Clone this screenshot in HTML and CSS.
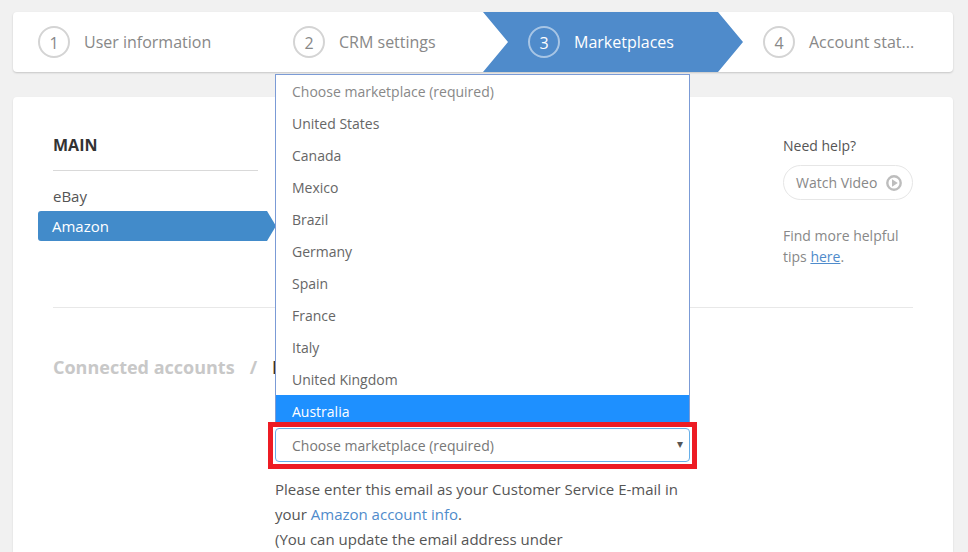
FILE: index.html
```html
<!DOCTYPE html>
<html lang="en">
<head>
<meta charset="utf-8">
<title>Marketplaces</title>
<link rel="stylesheet" href="styles.css">
</head>
<body>
<nav class="stepper">
  <div class="step step-1"><span class="num">1</span><span class="label">User information</span></div>
  <div class="step step-2"><span class="num">2</span><span class="label">CRM settings</span></div>
  <div class="step step-3 active"><span class="num">3</span><span class="label">Marketplaces</span></div>
  <div class="step step-4"><span class="num">4</span><span class="label">Account stat...</span></div>
</nav>
<main class="card">
  <section class="top">
    <div class="side">
      <h2 class="side-title">MAIN</h2>
      <ul class="side-list">
        <li class="side-item">eBay</li>
        <li class="side-item current">Amazon</li>
      </ul>
    </div>
    <aside class="help">
      <p class="help-title">Need help?</p>
      <a class="video" href="#">Watch Video
        <svg class="play" width="16" height="16" viewBox="0 0 16 16"><circle cx="8" cy="8" r="6.7" fill="none" stroke="#bdbdbd" stroke-width="2.4"/><path d="M6 4.2 11.8 8 6 11.8Z" fill="#bdbdbd"/></svg>
      </a>
      <p class="tips">Find more helpful tips <a href="#">here</a>.</p>
    </aside>
  </section>
  <hr class="rule">
  <h1 class="crumbs"><span class="crumb-link">Connected accounts</span><span class="crumb-sep">/</span><span class="crumb-now">Marketplace</span></h1>
  <section class="form">
    <div class="select-wrap">
      <ul class="dropdown">
        <li>Choose marketplace (required)</li>
        <li>United States</li>
        <li>Canada</li>
        <li>Mexico</li>
        <li>Brazil</li>
        <li>Germany</li>
        <li>Spain</li>
        <li>France</li>
        <li>Italy</li>
        <li>United Kingdom</li>
        <li class="hover">Australia</li>
      </ul>
      <div class="select">Choose marketplace (required)<span class="caret">▾</span></div>
      <div class="highlight"></div>
    </div>
    <p class="note">Please enter this email as your Customer Service E-mail in your <a href="#">Amazon account info</a>.<br>(You can update the email address under</p>
  </section>
</main>
</body>
</html>
```
FILE: styles.css
```css
* { box-sizing: border-box; }
html, body { height: 552px; overflow: hidden; }
body {
  margin: 0;
  padding: 12px 15px 0 13px;
  background: #f1f1f1;
  font-family: "Open Sans", sans-serif;
  font-size: 14px;
  color: #555;
}
ul { list-style: none; margin: 0; padding: 0; }
p, h1, h2 { margin: 0; }
a { color: #4f8bcb; text-decoration: none; }

.stepper {
  display: flex;
  height: 60px;
  background: #fff;
  border-radius: 4px;
  box-shadow: 0 1px 2px rgba(0,0,0,.18);
  overflow: hidden;
}
.step { display: flex; align-items: center; height: 60px; color: #888; font-size: 16px; }
.step-1 { width: 255px; padding-left: 25px; }
.step-2 { width: 215px; padding-left: 25px; }
.step-3 { width: 260px; padding-left: 45px; }
.step-4 { flex: 1; padding-left: 20px; }
.active {
  background: #4f8bcb;
  color: #fff;
  clip-path: polygon(0 0, calc(100% - 25px) 0, 100% 50%, calc(100% - 25px) 100%, 0 100%, 25px 50%);
}
.num {
  width: 32px;
  height: 32px;
  margin-right: 14px;
  padding-top: 1px;
  border: 2px solid #d4d4d4;
  border-radius: 50%;
  display: flex;
  align-items: center;
  justify-content: center;
  font-size: 16px;
  line-height: 1;
}
.active .num { border-color: #a7c5e5; }

.card {
  height: 455px;
  margin-top: 25px;
  padding: 0 40px;
  background: #fff;
  border-radius: 4px 4px 0 0;
  box-shadow: 0 1px 2px rgba(0,0,0,.12);
}
.top { display: flex; justify-content: space-between; height: 210px; padding-top: 38px; }
.side { width: 205px; }
.side-title {
  height: 36px;
  border-bottom: 1px solid #d9d9d9;
  font-size: 16px;
  font-weight: 700;
  line-height: 20px;
  color: #333;
}
.side-list { margin-top: 10px; }
.side-item { height: 30px; line-height: 30px; font-size: 15px; color: #555; }
.current {
  width: 238px;
  margin-left: -15px;
  padding-left: 14px;
  color: #fff;
  background: #428bca;
  border-radius: 3px 0 0 3px;
  clip-path: polygon(0 0, calc(100% - 9px) 0, 100% 50%, calc(100% - 9px) 100%, 0 100%);
}
.help { width: 130px; padding-top: 1px; }
.help-title { line-height: 20px; color: #555; }
.video {
  display: flex;
  align-items: center;
  justify-content: space-between;
  height: 35px;
  margin-top: 9px;
  padding: 0 10px 0 12px;
  border: 1px solid #e6e6e6;
  border-radius: 18px;
  color: #888;
}
.tips { width: 125px; margin-top: 25px; line-height: 21px; color: #888; }
.tips a { text-decoration: underline; }

.rule { margin: 0; border: 0; border-top: 1px solid #e8e8e8; }
.crumbs { display: flex; margin-top: 45px; font-size: 18px; font-weight: 700; line-height: 28px; color: #c8c8c8; }
.crumb-sep { margin: 0 15px; }
.crumb-now { color: #333; }

.form { width: 415px; margin-left: 222px; }
.select-wrap { position: relative; height: 34px; margin-top: 47px; }
.dropdown {
  position: absolute;
  left: 0;
  right: 0;
  bottom: 39px;
  height: 349px;
  background: #fff;
  border: 1px solid #7b9bd6;
  border-bottom: 0;
  overflow: hidden;
}
.dropdown li { height: 32px; padding-left: 16px; line-height: 34px; color: #666; }
.dropdown li:first-child { color: #888; }
.dropdown .hover { background: #1e90ff; color: #fff; }
.select {
  position: relative;
  height: 34px;
  padding-left: 16px;
  line-height: 33px;
  background: #fff;
  border: 1px solid #66afe9;
  border-radius: 4px;
  color: #777;
}
.caret { position: absolute; right: 6px; top: -2px; font-size: 12px; color: #555; }
.highlight {
  position: absolute;
  top: -6px;
  right: -7px;
  bottom: -7px;
  left: -7px;
  border: 5px solid #ed1c24;
  pointer-events: none;
}
.note { margin-top: 15px; font-size: 15px; line-height: 25px; color: #555; }
```
